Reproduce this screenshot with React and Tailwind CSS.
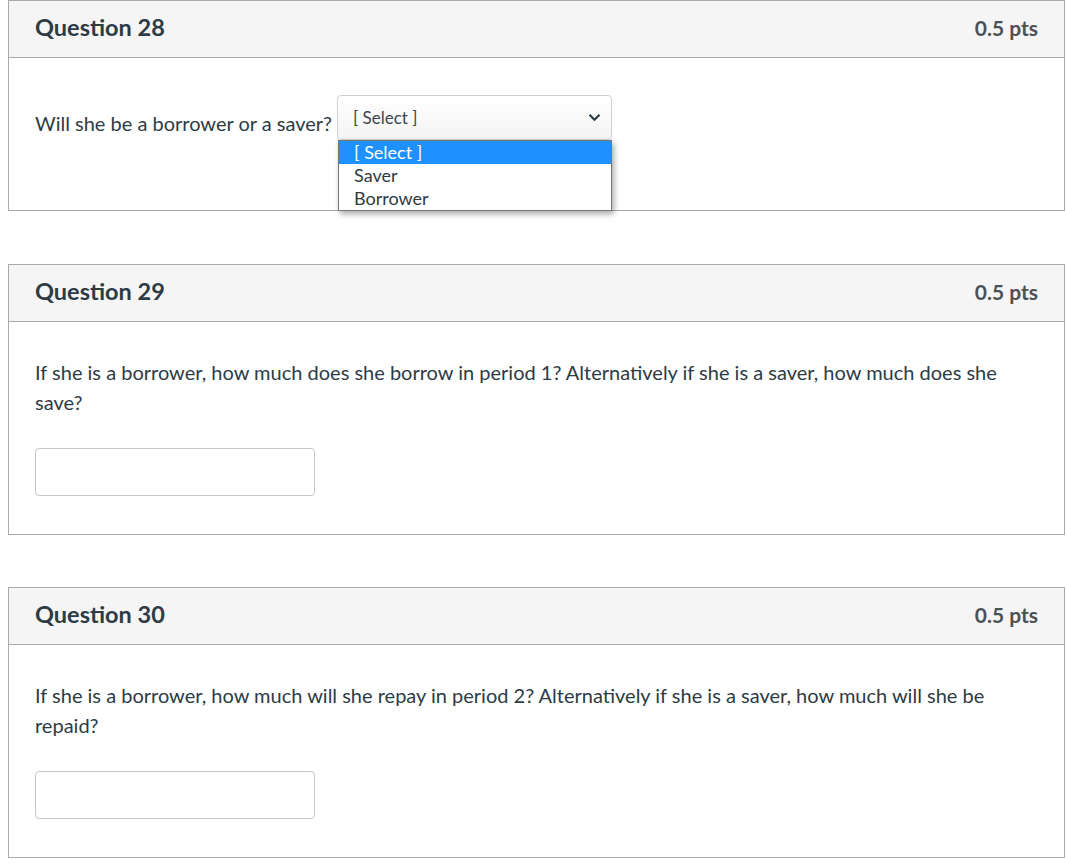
import React from "react";

function Header({ title }) {
  return (
    <div className="flex h-[57px] items-center justify-between border-b border-[#aaaaaa] bg-[#f5f5f5] px-[26px] pb-[2px]">
      <h2 className="text-[23.5px] font-bold text-[#2d3b45]">{title}</h2>
      <span className="text-[21px] font-bold text-[#4a5157]">0.5 pts</span>
    </div>
  );
}

function Chevron() {
  return (
    <svg width="13" height="9" viewBox="0 0 13 9" className="text-[#2d3b45]">
      <path d="M1.5 1.8 L6.5 6.8 L11.5 1.8" fill="none" stroke="currentColor" strokeWidth="2.2" />
    </svg>
  );
}

function SelectQuestion() {
  return (
    <div className="border border-[#aaaaaa] bg-white">
      <Header title="Question 28" />
      <div className="px-[26px] pb-[70px] pt-[37px]">
        <div className="flex items-center gap-[5px]">
          <span className="pt-[10px] leading-[30px]">Will she be a borrower or a saver?</span>
          <div className="relative">
            <div className="flex h-[45px] w-[275px] items-center justify-between rounded-[4px] border border-[#cfcfcf] bg-gradient-to-b from-white to-[#f4f4f4] pl-[15px] pr-[10px] text-[17px] text-[#3a4650]">
              <span>[ Select ]</span>
              <Chevron />
            </div>
            <ul className="absolute left-[1px] top-[45px] z-10 w-[274px] border border-[#767676] bg-white text-[18px] leading-[23px] text-[#2d3b45] shadow-[2px_3px_6px_rgba(0,0,0,0.35)]">
              <li className="bg-[#1e90ff] pl-[15px] text-white">[ Select ]</li>
              <li className="pl-[15px]">Saver</li>
              <li className="pl-[15px]">Borrower</li>
            </ul>
          </div>
        </div>
      </div>
    </div>
  );
}

function InputQuestion({ title, text, className }) {
  return (
    <div className={"border border-[#aaaaaa] bg-white " + className}>
      <Header title={title} />
      <div className="px-[26px] pb-[38px] pt-[35px]">
        <p className="leading-[30px]">{text}</p>
        <input
          type="text"
          className="mt-[31px] block h-[48px] w-[280px] rounded-[4px] border border-[#c7c7c7] bg-white"
        />
      </div>
    </div>
  );
}

export default function App() {
  return (
    <div
      className="min-h-[866px] bg-white px-[8px] text-[20px] text-[#2d3b45]"
      style={{ fontFamily: "Lato, 'Liberation Sans', sans-serif" }}
    >
      <div className="flex w-[1057px] flex-col">
        <SelectQuestion />
        <InputQuestion
          className="mt-[53px]"
          title="Question 29"
          text="If she is a borrower, how much does she borrow in period 1? Alternatively if she is a saver, how much does she save?"
        />
        <InputQuestion
          className="mt-[52px]"
          title="Question 30"
          text="If she is a borrower, how much will she repay in period 2? Alternatively if she is a saver, how much will she be repaid?"
        />
      </div>
    </div>
  );
}
